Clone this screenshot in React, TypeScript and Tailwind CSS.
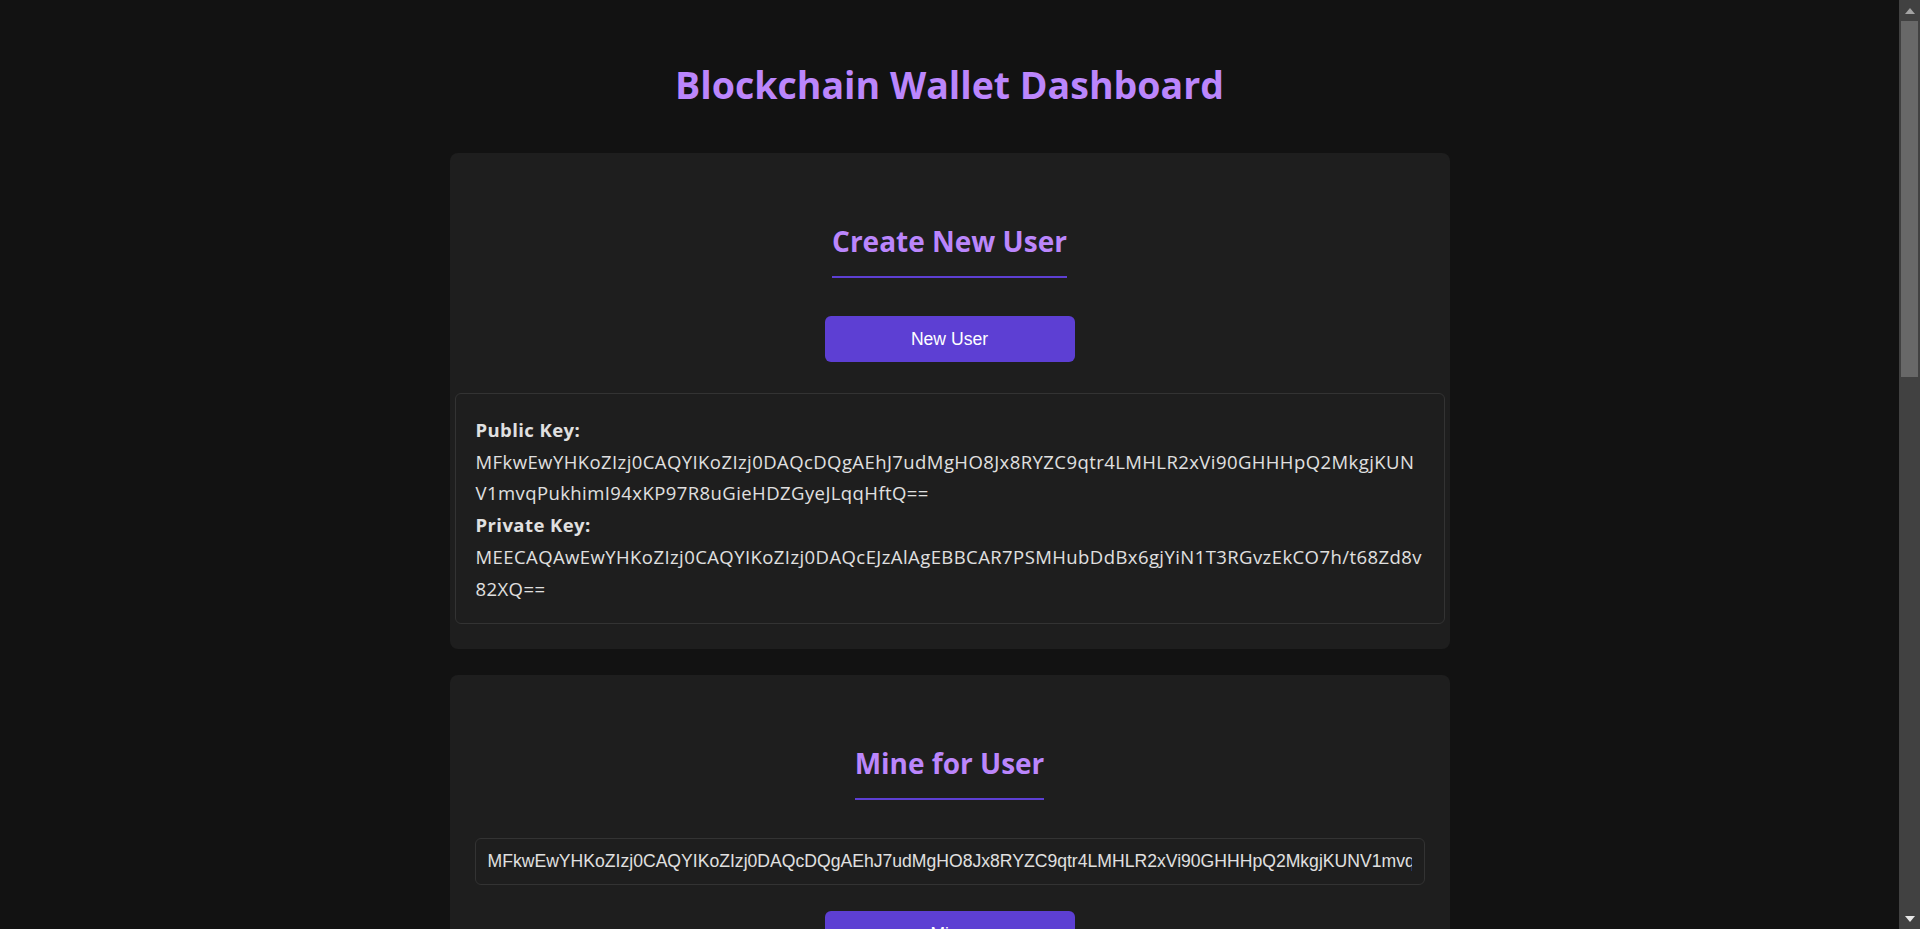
import { useEffect } from 'react';

const PUBLIC_KEY =
  'MFkwEwYHKoZIzj0CAQYIKoZIzj0DAQcDQgAEhJ7udMgHO8Jx8RYZC9qtr4LMHLR2xVi90GHHHpQ2MkgjKUNV1mvqPukhimI94xKP97R8uGieHDZGyeJLqqHftQ==';
const PRIVATE_KEY =
  'MEECAQAwEwYHKoZIzj0CAQYIKoZIzj0DAQcEJzAlAgEBBCAR7PSMHubDdBx6gjYiN1T3RGvzEkCO7h/t68Zd8v82XQ==';

const blocks = [
  { index: 0, hash: '0000a3f1c9e2b7d54f8e61c0a2b39d7e4f1c8a6b5d2e9f3a7c1b4d8e6f2a0c9b', prev: '0', nonce: 0, txs: 0 },
  { index: 1, hash: '00007c2e9b1f4a6d8c3e5b7a9f1d2c4e6b8a0d3f5c7e9b1a2d4f6c8e0a3b5d7f', prev: '0000a3f1c9e2b7d54f8e61c0a2b39d7e4f1c8a6b5d2e9f3a7c1b4d8e6f2a0c9b', nonce: 48213, txs: 1 },
  { index: 2, hash: '0000e5b8d1a3c7f9e2b4d6a8c0f1e3b5d7a9c2e4f6b8d0a1c3e5f7b9d2a4c6e8', prev: '00007c2e9b1f4a6d8c3e5b7a9f1d2c4e6b8a0d3f5c7e9b1a2d4f6c8e0a3b5d7f', nonce: 91577, txs: 2 },
];

const Card = ({ title, children }: { title: string; children: React.ReactNode }) => (
  <section className="flex flex-col items-center rounded-lg bg-[#1e1e1e] px-[25px] pt-[70px] pb-[25px]">
    <h2 className="border-b-2 border-[#5d3fd3] pb-[17px] text-[28px] leading-[36px] font-bold text-[#bb86fc]">
      {title}
    </h2>
    {children}
  </section>
);

const Button = ({ label, className = '' }: { label: string; className?: string }) => (
  <button
    type="button"
    className={`h-[46px] w-[250px] rounded-md bg-[#5d3fd3] font-['Liberation_Sans',Arial,sans-serif] text-[17.6px] text-white ${className}`}
  >
    {label}
  </button>
);

const Field = ({ placeholder, value = '', className = '' }: { placeholder: string; value?: string; className?: string }) => (
  <input
    readOnly
    value={value}
    placeholder={placeholder}
    className={`h-[47px] w-full rounded-md border border-[#333] bg-[#1e1e1e] px-3 font-['Liberation_Sans',Arial,sans-serif] text-[17.6px] text-[#e0e0e0] outline-none placeholder:text-[#777] ${className}`}
  />
);

// long key, wrapped at the same place as the original layout
const KeyText = ({ value, split }: { value: string; split: string }) => {
  const at = value.indexOf(split);
  return (
    <>
      {value.slice(0, at)}
      <br />
      {value.slice(at)}
    </>
  );
};

// dark browser scrollbar as seen in the screenshot
const Scrollbar = () => (
  <div className="fixed top-0 right-0 flex h-screen w-[21px] flex-col bg-[#414141]">
    <div className="flex h-[21px] items-center justify-center">
      <svg width="10" height="6" viewBox="0 0 10 6">
        <path d="M0 6 L5 0 L10 6 Z" fill="#a3a3a3" />
      </svg>
    </div>
    <div className="mr-[2px] ml-[2px] h-[356px] bg-[#686868]" />
    <div className="flex-1" />
    <div className="flex h-[21px] items-center justify-center">
      <svg width="10" height="6" viewBox="0 0 10 6">
        <path d="M0 0 L10 0 L5 6 Z" fill="#e8e8e8" />
      </svg>
    </div>
  </div>
);

export default function App() {
  useEffect(() => {
    document.documentElement.classList.add('bg-[#121212]');
  }, []);

  return (
    <div className="min-h-screen bg-[#121212] pr-[21px] pb-16 font-['Open_Sans','Noto_Sans',sans-serif] text-[#e0e0e0]">
      <h1 className="pt-[61px] text-center text-[37.5px] leading-[48px] font-bold text-[#bb86fc]">
        Blockchain Wallet Dashboard
      </h1>

      <main className="mx-auto mt-[44px] flex w-[1000px] flex-col gap-[26px]">
        <Card title="Create New User">
          <Button label="New User" className="mt-[38px]" />
          <div className="-mx-5 mt-[31px] self-stretch rounded-md border border-[#333] bg-[#1e1e1e] px-5 pt-5 pb-[19px] text-[18.5px] leading-[31.7px] tracking-[0.42px] break-all">
            <p>
              <strong>Public Key:</strong>
              <br />
              <KeyText value={PUBLIC_KEY} split="V1mvq" />
            </p>
            <p>
              <strong>Private Key:</strong>
              <br />
              <KeyText value={PRIVATE_KEY} split="82XQ==" />
            </p>
          </div>
        </Card>

        <Card title="Mine for User">
          <Field placeholder="Enter public key" value={PUBLIC_KEY} className="mt-[38px]" />
          <Button label="Mine" className="mt-[26px]" />
          <div className="mt-[31px] self-stretch rounded-md border border-[#333] px-5 py-4 text-[17.6px] leading-[1.8]">
            <strong>Result:</strong> Block #3 mined successfully. Reward of 50 coins sent to user.
          </div>
        </Card>

        <Card title="Send Transaction">
          <div className="mt-[38px] flex w-full flex-col gap-4">
            <Field placeholder="Sender public key" value={PUBLIC_KEY} />
            <Field placeholder="Sender private key" value={PRIVATE_KEY} />
            <Field placeholder="Recipient public key" />
            <Field placeholder="Amount" />
          </div>
          <Button label="Send" className="mt-[26px]" />
        </Card>

        <Card title="Check Balance">
          <Field placeholder="Enter public key" value={PUBLIC_KEY} className="mt-[38px]" />
          <Button label="Get Balance" className="mt-[26px]" />
        </Card>

        <Card title="View Blockchain">
          <Button label="Load Chain" className="mt-[38px]" />
          <div className="mt-[31px] flex w-full flex-col gap-4">
            {blocks.map((b) => (
              <div
                key={b.index}
                className="rounded-md border border-[#333] px-5 py-4 text-[16px] leading-[1.8] break-all"
              >
                <p className="font-bold text-[#bb86fc]">Block #{b.index}</p>
                <p>
                  <strong>Hash:</strong> {b.hash}
                </p>
                <p>
                  <strong>Previous Hash:</strong> {b.prev}
                </p>
                <p>
                  <strong>Nonce:</strong> {b.nonce} &middot; <strong>Transactions:</strong> {b.txs}
                </p>
              </div>
            ))}
          </div>
        </Card>
      </main>

      <Scrollbar />
    </div>
  );
}
